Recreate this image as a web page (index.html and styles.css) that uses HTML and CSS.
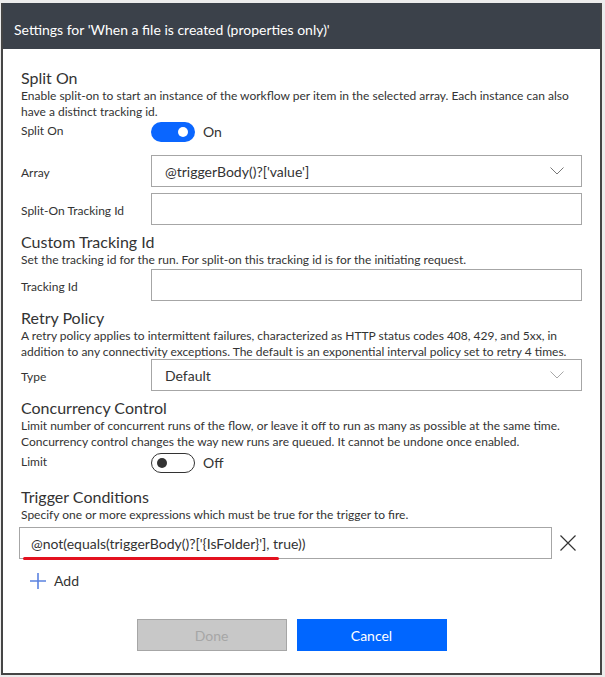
FILE: index.html
```html
<!DOCTYPE html>
<html lang="en">
<head>
<meta charset="utf-8">
<title>Settings</title>
<link rel="stylesheet" href="styles.css">
</head>
<body>
<div class="dialog">
  <div class="header">Settings for 'When a file is created (properties only)'</div>
  <div class="content">
    <div class="section s-split">
      <div class="title">Split On</div>
      <div class="desc">Enable split-on to start an instance of the workflow per item in the selected array. Each instance can also have a distinct tracking id.</div>
      <div class="row row-toggle">
        <div class="label">Split On</div>
        <div class="toggle on"><span class="knob"></span></div>
        <span class="toggle-text">On</span>
      </div>
      <div class="row row-field r-array">
        <div class="label">Array</div>
        <div class="field select">
          <span class="value">@triggerBody()?['value']</span>
          <svg class="chev dark" width="14" height="8" viewBox="0 0 14 8"><path d="M0.5 0.5 L7 7 L13.5 0.5" fill="none" stroke="#777" stroke-width="1"/></svg>
        </div>
      </div>
      <div class="row row-field r-track">
        <div class="label">Split-On Tracking Id</div>
        <div class="field"></div>
      </div>
    </div>

    <div class="section s-custom">
      <div class="title">Custom Tracking Id</div>
      <div class="desc">Set the tracking id for the run. For split-on this tracking id is for the initiating request.</div>
      <div class="row row-field r-tid">
        <div class="label">Tracking Id</div>
        <div class="field"></div>
      </div>
    </div>

    <div class="section s-retry">
      <div class="title">Retry Policy</div>
      <div class="desc">A retry policy applies to intermittent failures, characterized as HTTP status codes 408, 429, and 5xx, in addition to any connectivity exceptions. The default is an exponential interval policy set to retry 4 times.</div>
      <div class="row row-field r-type">
        <div class="label">Type</div>
        <div class="field select">
          <span class="value">Default</span>
          <svg class="chev" width="14" height="8" viewBox="0 0 14 8"><path d="M0.5 0.5 L7 7 L13.5 0.5" fill="none" stroke="#a8a8a8" stroke-width="1"/></svg>
        </div>
      </div>
    </div>

    <div class="section s-conc">
      <div class="title">Concurrency Control</div>
      <div class="desc">Limit number of concurrent runs of the flow, or leave it off to run as many as possible at the same time. Concurrency control changes the way new runs are queued. It cannot be undone once enabled.</div>
      <div class="row row-toggle r-limit">
        <div class="label">Limit</div>
        <div class="toggle off"><span class="knob"></span></div>
        <span class="toggle-text">Off</span>
      </div>
    </div>

    <div class="section s-trigger">
      <div class="title">Trigger Conditions</div>
      <div class="desc">Specify one or more expressions which must be true for the trigger to fire.</div>
      <div class="cond-row">
        <div class="field cond">
          <span class="value">@not(equals(triggerBody()?['{IsFolder}'], true))</span>
          <span class="underline"></span>
        </div>
        <svg class="close" width="16" height="16" viewBox="0 0 16 16"><path d="M0.5 0.5 L15.5 15.5 M15.5 0.5 L0.5 15.5" stroke="#333" stroke-width="1.2" fill="none"/></svg>
      </div>
      <div class="add">
        <svg class="plus" width="16" height="16" viewBox="0 0 16 16"><path d="M8 0 V16 M0 8 H16" stroke="#5b82e0" stroke-width="1.6" fill="none"/></svg>
        <span>Add</span>
      </div>
    </div>

    <div class="buttons">
      <button class="btn done" disabled>Done</button>
      <button class="btn cancel">Cancel</button>
    </div>
  </div>
</div>
</body>
</html>
```
FILE: styles.css
```css
html, body {
  margin: 0;
  padding: 0;
  background: #ececec;
}
body {
  font-family: "Segoe UI", Lato, "Noto Sans", sans-serif;
  color: #252525;
}
.dialog {
  margin: 3px 0 0 1px;
  width: 601px;
  height: 672px;
  box-sizing: border-box;
  border: 2px solid #454545;
  border-top: none;
  background: #fff;
  display: flex;
  flex-direction: column;
}
.header {
  height: 46px;
  box-sizing: border-box;
  background: #3b414a;
  color: #fff;
  font-size: 14px;
  padding: 6px 11px 0;
  display: flex;
  align-items: center;
}
.content {
  padding: 19px 18px 0 16px;
}
.title {
  font-size: 16px;
  line-height: 20px;
  color: #333;
  padding-left: 2px;
}
.desc {
  font-size: 12px;
  line-height: 16px;
  color: #333;
  padding-left: 2px;
}
.row {
  display: flex;
}
.label {
  width: 130px;
  flex: none;
  font-size: 12px;
  line-height: 16px;
  padding-left: 2px;
  color: #333;
}
.row-toggle {
  align-items: flex-start;
  margin-top: 1px;
  height: 22px;
}
.row-toggle .label {
  padding-top: 2px;
}
.toggle {
  width: 44px;
  height: 20px;
  box-sizing: border-box;
  border-radius: 10px;
  margin-top: 1px;
  position: relative;
  flex: none;
}
.toggle.on {
  background: #0a66ff;
}
.toggle.off {
  background: #fff;
  border: 1px solid #333;
}
.knob {
  position: absolute;
  top: 5px;
  width: 10px;
  height: 10px;
  border-radius: 50%;
}
.toggle.on .knob {
  left: 27px;
  background: #fff;
}
.toggle.off .knob {
  left: 5px;
  top: 4px;
  background: #333;
}
.toggle-text {
  font-size: 14px;
  line-height: 20px;
  margin-left: 8px;
  margin-top: 1px;
  color: #333;
}
.row-field {
  align-items: center;
}
.row-field .label {
  padding-top: 3px;
}
.field {
  flex: 1;
  height: 32px;
  box-sizing: border-box;
  border: 1px solid #a6a6a6;
  display: flex;
  align-items: center;
  padding: 0 13px;
  font-size: 14px;
  color: #333;
  position: relative;
}
.select .value {
  flex: 1;
}
.chev {
  margin-right: 4px;
}
.r-array { margin-top: 12px; }
.r-track { margin-top: 6px; }
.s-custom { margin-top: 7px; }
.r-tid { margin-top: 1px; }
.s-retry { margin-top: 7px; }
.r-type { margin-top: -1px; }
.s-conc { margin-top: 7px; }
.r-limit { margin-top: 2px; }
.s-trigger { margin-top: 13px; }
.cond-row {
  display: flex;
  align-items: center;
  margin-top: 4px;
  margin-right: 6px;
}
.cond {
  padding-left: 11px;
}
.underline {
  position: absolute;
  left: 3px;
  top: 29px;
  width: 256px;
  height: 3px;
  border-radius: 2px;
  background: #e3111f;
}
.close {
  flex: none;
  margin-left: 8px;
}
.add {
  display: flex;
  align-items: center;
  margin-top: 13px;
  margin-left: 11px;
  font-size: 14px;
  color: #333;
}
.add span {
  margin-left: 8px;
}
.buttons {
  display: flex;
  justify-content: center;
  gap: 10px;
  margin-top: 30px;
  padding-right: 18px;
}
.btn {
  width: 150px;
  height: 32px;
  box-sizing: border-box;
  font-family: inherit;
  font-size: 14px;
  border: 1px solid transparent;
  padding: 0;
}
.done {
  background: #c8c8c8;
  border-color: #a6a6a6;
  color: #a6a6a6;
}
.cancel {
  background: #0066ff;
  color: #fff;
}
```
